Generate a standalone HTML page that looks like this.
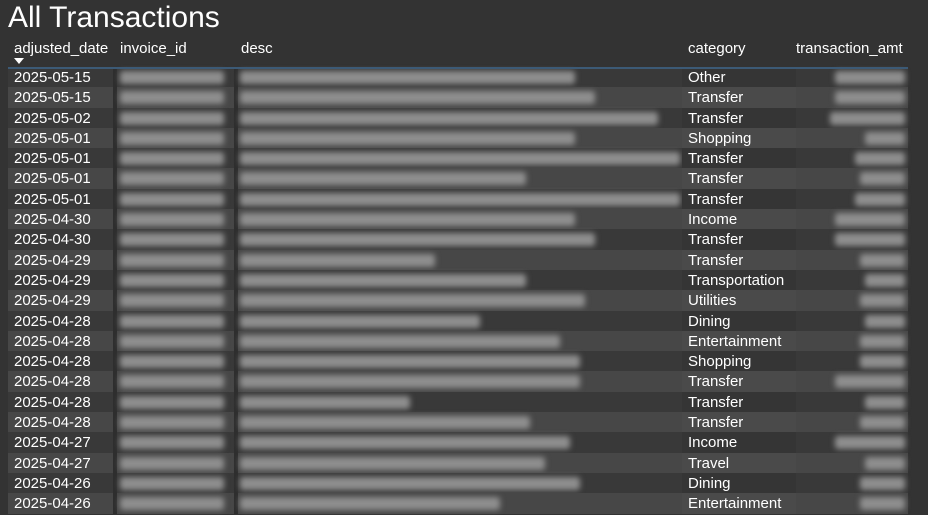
<!DOCTYPE html>
<html><head><meta charset="utf-8"><style>
body{margin:0;background:#333;width:928px;height:514px;overflow:hidden;font-family:"Liberation Sans",Arial,sans-serif;color:#fff;}
h1{margin:0;position:absolute;left:8px;top:0;font-size:30px;font-weight:normal;line-height:35px;}
.hdr{position:absolute;top:40px;font-size:15px;}
.arrow{position:absolute;left:14px;top:58px;width:0;height:0;border-left:5px solid transparent;border-right:5px solid transparent;border-top:6px solid #fff;}
.line{position:absolute;left:8px;top:67px;width:900px;height:2px;background:#3c5a76;}
.rows{position:absolute;left:8px;top:67px;width:900px;}
.r{height:20.3px;position:relative;font-size:15px;line-height:22px;}
.r:nth-child(odd){background:#393939}
.r:nth-child(even){background:#474747}
.c{position:absolute;top:0;height:100%;}
.d{left:6px}
.cat{left:674px;width:108px;padding-left:6px;height:100%;}
.r:nth-child(odd) .cat{background:#353535}
.r:nth-child(even) .cat{background:#4a4a4a}
.b{position:absolute;top:4px;height:13px;background:#8e8e8e;filter:blur(3px);border-radius:3px}
.sep{position:absolute;top:0;width:4px;height:100%;background:#2e2e2e;}
</style></head><body>
<h1>All Transactions</h1>
<div class="hdr" style="left:14px">adjusted_date</div>
<div class="hdr" style="left:120px">invoice_id</div>
<div class="hdr" style="left:241px">desc</div>
<div class="hdr" style="left:688px">category</div>
<div class="hdr" style="left:796px">transaction_amt</div>
<div class="arrow"></div>
<div class="rows" id="rows"></div>
<div class="line"></div>
<script>
var d=[["2025-05-15","Other",335,70],["2025-05-15","Transfer",355,70],["2025-05-02","Transfer",418,75],["2025-05-01","Shopping",335,40],["2025-05-01","Transfer",440,50],["2025-05-01","Transfer",286,45],["2025-05-01","Transfer",440,50],["2025-04-30","Income",335,70],["2025-04-30","Transfer",355,70],["2025-04-29","Transfer",195,45],["2025-04-29","Transportation",286,40],["2025-04-29","Utilities",345,45],["2025-04-28","Dining",240,40],["2025-04-28","Entertainment",320,45],["2025-04-28","Shopping",340,45],["2025-04-28","Transfer",340,70],["2025-04-28","Transfer",170,40],["2025-04-28","Transfer",290,45],["2025-04-27","Income",330,70],["2025-04-27","Travel",305,40],["2025-04-26","Dining",340,45],["2025-04-26","Entertainment",260,45]];
var h="";
d.forEach(function(x){h+='<div class="r"><div class="c d">'+x[0]+'</div><div class="sep" style="left:105px"></div><div class="b" style="left:112px;width:104px"></div><div class="sep" style="left:226px"></div><div class="b" style="left:232px;width:'+x[2]+'px"></div><div class="c cat">'+x[1]+'</div><div class="b" style="left:'+(897-x[3])+'px;width:'+x[3]+'px"></div></div>';});
document.getElementById("rows").innerHTML=h;
</script>
</body></html>
